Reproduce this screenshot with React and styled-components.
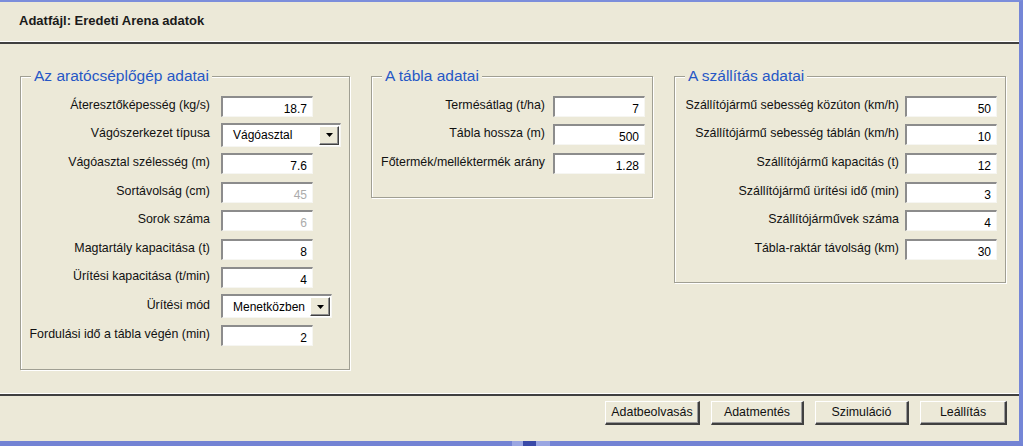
import styled, { createGlobalStyle } from 'styled-components';

const GlobalStyle = createGlobalStyle`
  html, body {
    margin: 0;
    padding: 0;
    background: #ece9d8;
  }
  body {
    font-family: "Liberation Sans", Arial, sans-serif;
    font-size: 12px;
    color: #000;
  }
  * {
    box-sizing: border-box;
  }
`;

const harvester = [
  { label: 'Áteresztőképesség (kg/s)', value: '18.7' },
  { label: 'Vágószerkezet típusa', combo: 'Vágóasztal', comboWidth: 120 },
  { label: 'Vágóasztal szélesség (m)', value: '7.6' },
  { label: 'Sortávolság (cm)', value: '45', disabled: true },
  { label: 'Sorok száma', value: '6', disabled: true },
  { label: 'Magtartály kapacitása (t)', value: '8' },
  { label: 'Ürítési kapacitása (t/min)', value: '4' },
  { label: 'Ürítési mód', combo: 'Menetközben', comboWidth: 111 },
  { label: 'Fordulási idő a tábla végén (min)', value: '2' },
];

const field = [
  { label: 'Termésátlag (t/ha)', value: '7' },
  { label: 'Tábla hossza (m)', value: '500' },
  { label: 'Főtermék/melléktermék arány', value: '1.28' },
];

const transport = [
  { label: 'Szállítójármű sebesség közúton (km/h)', value: '50' },
  { label: 'Szállítójármű sebesség táblán (km/h)', value: '10' },
  { label: 'Szállítójármű kapacitás (t)', value: '12' },
  { label: 'Szállítójármű ürítési idő (min)', value: '3' },
  { label: 'Szállítójárművek száma', value: '4' },
  { label: 'Tábla-raktár távolság (km)', value: '30' },
];

const buttons = [
  { text: 'Adatbeolvasás', width: 95 },
  { text: 'Adatmentés', width: 93 },
  { text: 'Szimuláció', width: 94 },
  { text: 'Leállítás', width: 87 },
];

function GroupBox({ title, width, height, labelWidth, gap, rows }) {
  return (
    <Group $width={width} $height={height}>
      <GroupTitle>{title}</GroupTitle>
      <Rows>
        {rows.map((r) => (
          <Row key={r.label} $gap={gap}>
            <Label $width={labelWidth}>{r.label}</Label>
            {r.combo ? (
              <Combo $width={r.comboWidth}>
                <ComboText>{r.combo}</ComboText>
                <ArrowButton>
                  <svg width="7" height="4" viewBox="0 0 7 4">
                    <path d="M0 0H7L3.5 4Z" fill="#000" />
                  </svg>
                </ArrowButton>
              </Combo>
            ) : (
              <Field $disabled={r.disabled}>{r.value}</Field>
            )}
          </Row>
        ))}
      </Rows>
    </Group>
  );
}

export default function App() {
  return (
    <>
      <GlobalStyle />
      <Window>
        <Header>Adatfájl: Eredeti Arena adatok</Header>
        <Separator />
        <Content>
          <GroupBox
            title="Az aratócséplőgép adatai"
            width={330}
            height={294}
            labelWidth={189}
            gap={11}
            rows={harvester}
          />
          <GroupBox
            title="A tábla adatai"
            width={282}
            height={122}
            labelWidth={173}
            gap={8}
            rows={field}
          />
          <GroupBox
            title="A szállítás adatai"
            width={332}
            height={207}
            labelWidth={224}
            gap={6}
            rows={transport}
          />
        </Content>
        <Separator />
        <ButtonBar>
          {buttons.map((b) => (
            <Button key={b.text} $width={b.width}>{b.text}</Button>
          ))}
        </ButtonBar>
        <ScrollThumb />
      </Window>
    </>
  );
}

const Window = styled.div`
  position: relative;
  width: 1023px;
  height: 446px;
  display: flex;
  flex-direction: column;
  background: #ece9d8;
  border-top: 2px solid #7c8edb;
  border-right: 4px solid #7586d6;
  border-bottom: 5px solid #7383d4;
`;

const Header = styled.div`
  height: 39px;
  display: flex;
  align-items: center;
  padding: 0 0 3px 19px;
  font-weight: 700;
  font-size: 13px;
  color: #1a1a1a;
`;

const Separator = styled.div`
  height: 3px;
  border-top: 1px solid #ffffff;
  background: #404040;
`;

const Content = styled.div`
  flex: 1;
  display: flex;
  align-items: flex-start;
  gap: 21px;
  padding: 32px 0 0 20px;
`;

const Group = styled.div`
  position: relative;
  width: ${(p) => p.$width}px;
  height: ${(p) => p.$height}px;
  border: 1px solid #a09f93;
  box-shadow: inset 1px 1px 0 #ffffff, 1px 1px 0 #ffffff;
`;

const GroupTitle = styled.div`
  position: absolute;
  top: -10px;
  left: 10px;
  padding: 0 3px;
  background: #ece9d8;
  color: #2657c6;
  font-size: 15.5px;
  line-height: 18px;
`;

const Rows = styled.div`
  padding-top: 15px;
  display: flex;
  flex-direction: column;
`;

const Row = styled.div`
  height: 28.6px;
  display: flex;
  align-items: center;
  gap: ${(p) => p.$gap}px;
`;

const Label = styled.div`
  width: ${(p) => p.$width}px;
  flex-shrink: 0;
  text-align: right;
  white-space: nowrap;
  padding-bottom: 3px;
  font-size: 12.4px;
  color: #111;
`;

const Field = styled.div`
  width: 92px;
  height: 21px;
  background: #ffffff;
  border-style: solid;
  border-width: 2px 1px 1px 2px;
  border-color: #8c8c8c #f6f6f2 #f6f6f2 #8c8c8c;
  text-align: right;
  padding: 4px 5px 0 0;
  line-height: 14px;
  color: ${(p) => (p.$disabled ? '#ababab' : '#000')};
`;

const Combo = styled.div`
  width: ${(p) => p.$width}px;
  height: 24px;
  display: flex;
  align-items: center;
  background: #ffffff;
  border-style: solid;
  border-width: 2px 1px 1px 2px;
  border-color: #8c8c8c #f6f6f2 #f6f6f2 #8c8c8c;
  padding: 0 1px 0 0;
`;

const ComboText = styled.div`
  flex: 1;
  padding-left: 10px;
  white-space: nowrap;
  overflow: hidden;
  font-size: 12px;
`;

const ArrowButton = styled.div`
  width: 20px;
  height: 19px;
  display: flex;
  align-items: center;
  justify-content: center;
  background: #ece9d8;
  border-style: solid;
  border-width: 1px;
  border-color: #ffffff #404040 #404040 #ffffff;
  box-shadow: inset -1px -1px 0 #8c8c8c;
`;

const ButtonBar = styled.div`
  height: 45px;
  display: flex;
  justify-content: flex-end;
  align-items: flex-start;
  gap: 11px;
  padding: 5px 12px 0 0;
`;

const Button = styled.div`
  width: ${(p) => p.$width}px;
  height: 24px;
  display: flex;
  align-items: center;
  justify-content: center;
  background: #ece9d8;
  border-style: solid;
  border-width: 1px 2px 2px 1px;
  border-color: #ffffff #404040 #404040 #ffffff;
  box-shadow: inset -1px -1px 0 #9a9a9a;
  font-size: 12.4px;
  color: #111;
  padding-bottom: 1px;
`;

const ScrollThumb = styled.div`
  position: absolute;
  left: 512px;
  bottom: -5px;
  width: 38px;
  height: 5px;
  background: linear-gradient(90deg, #9aa6e2 0 30%, #3a4aa8 30% 62%, #9aa6e2 62%);
`;
